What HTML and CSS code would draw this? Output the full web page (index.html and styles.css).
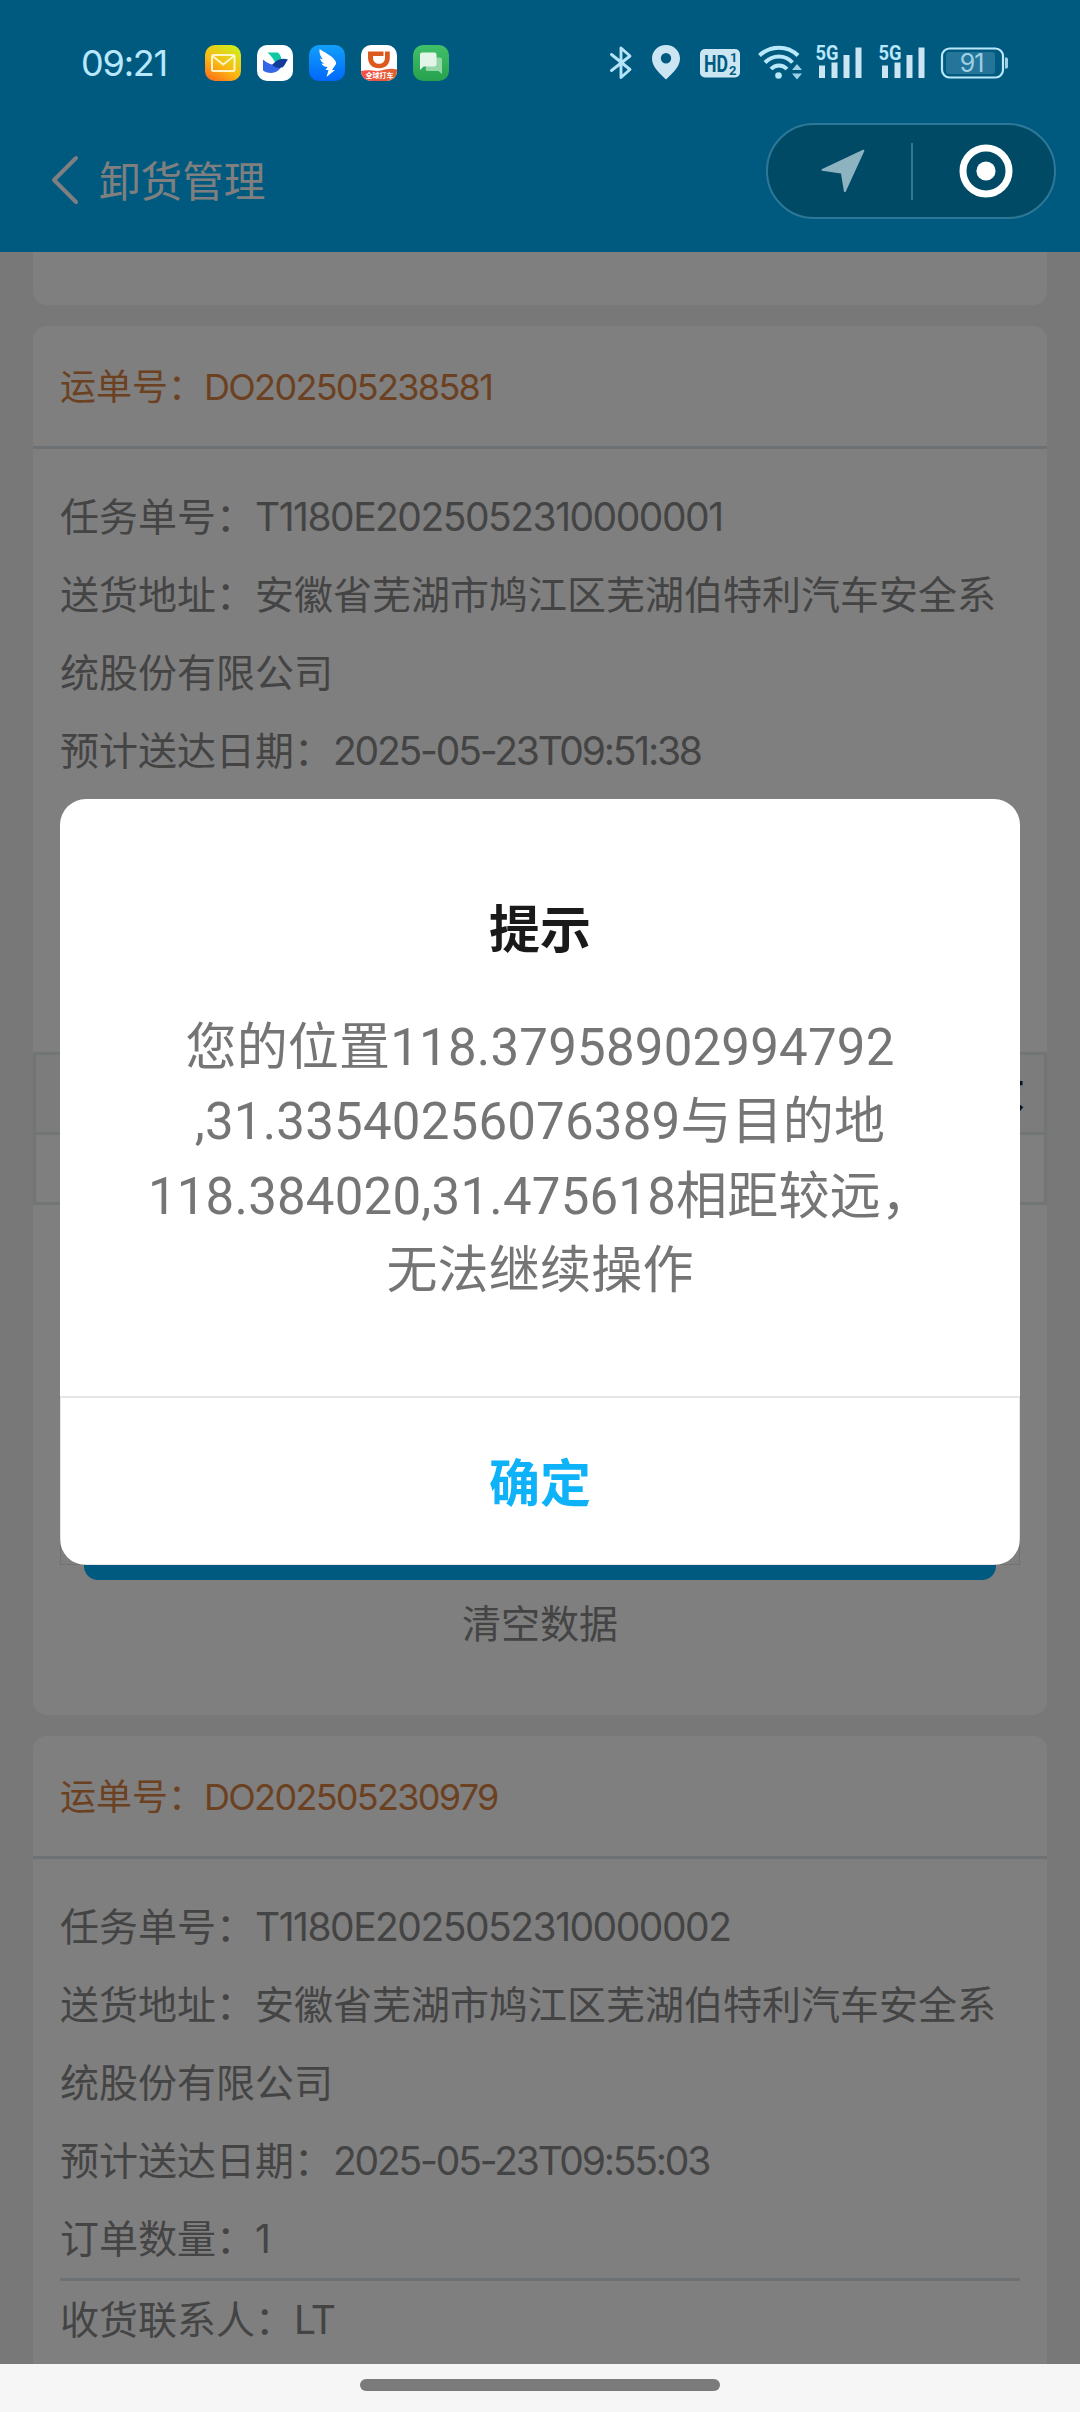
FILE: index.html
```html
<!DOCTYPE html>
<html lang="zh-CN">
  <head>
    <meta charset="UTF-8" />
    <meta name="viewport" content="width=device-width, initial-scale=1.0" />
    <title>卸货管理</title>
    <link rel="stylesheet" href="styles.css">
  </head>
  <body>
    <div class="screen">
      <header class="header">
        <!-- Status bar -->
        <div class="status-bar">
          <span class="clock">09:21</span>
          <div class="app-icons">
            <svg width="36" height="36" viewBox="0 0 36 36">
              <defs>
                <linearGradient id="mail-bg" x1="0.1" y1="1" x2="0.7" y2="0">
                  <stop offset="0" stop-color="#ff6a1a" />
                  <stop offset="0.45" stop-color="#fbb612" />
                  <stop offset="1" stop-color="#d3ea1c" />
                </linearGradient>
              </defs>
              <rect width="36" height="36" rx="10" fill="url(#mail-bg)" />
              <rect x="7" y="10" width="22.500" height="16" rx="1.500" fill="none" stroke="#fff6c8" stroke-width="2" />
              <path d="M7.500 11l10.700 8.500L29 11" fill="none" stroke="#fff6c8" stroke-width="2" />
            </svg>
            <svg width="36" height="36" viewBox="0 0 36 36">
              <rect width="36" height="36" rx="10" fill="#fff" />
              <path d="M10.500 7.500h10.500c2 1.800 3 4.200 3.500 7-2.200.8-4 2-6 4-1.500-4-4.500-8-8-11z" fill="#0fc9a4" />
              <path d="M6 14.500c4 3.500 9 6 14 6 2.500 0 4.500-.8 6.500-2.500-2.500 6-7 10-12.500 10-3.500 0-6-1-8-2.500z" fill="#3566e8" />
              <path d="M15 20c4-4.500 9-8 16-5.500-2 2-2.500 5-4.500 7-3 2.500-8 1.500-11.500-1.500z" fill="#133c9a" />
            </svg>
            <svg width="36" height="36" viewBox="0 0 36 36">
              <defs>
                <linearGradient id="wing-bg" x1="0" y1="0" x2="0" y2="1">
                  <stop offset="0" stop-color="#12a0fb" />
                  <stop offset="1" stop-color="#0067fb" />
                </linearGradient>
              </defs>
              <rect width="36" height="36" rx="10" fill="url(#wing-bg)" />
              <path d="M10.500 4c5 3.500 11 6 14 9.500 1.500 2 3 3.500 2.500 5.500l-4 6h3L17.500 32l2-7h-3l2-3c-3 0-5-1.500-6-3.500l3 .2c-2.500-1.200-4-3-4.500-5.200l3 1c-2.500-3-4-6.500-3.500-10.500z" fill="#fff" />
            </svg>
            <svg width="36" height="36" viewBox="0 0 36 36">
              <defs>
                <linearGradient id="car-bg" x1="0" y1="0" x2="1" y2="0">
                  <stop offset="0" stop-color="#f4504a" />
                  <stop offset="1" stop-color="#e0602f" />
                </linearGradient>
                <clipPath id="car-clip"><rect width="36" height="36" rx="10" /></clipPath>
              </defs>
              <rect width="36" height="36" rx="10" fill="#fff" />
              <path d="M0 26c8-2 14 1 20-.5s10-2.500 16-1v13H0z" fill="url(#car-bg)" clip-path="url(#car-clip)" />
              <path d="M7 6.500h15.500V11H12v1.500c0 4 2.500 6.300 6 6.300s6-2.300 6-6.300v-6h4.800v6c0 6.800-4.300 10.800-10.800 10.800S7 19.300 7 12.500z" fill="#dc5a1d" />
              <text x="18.500" y="32.500" class="car-label">全球打车</text>
            </svg>
            <svg width="36" height="36" viewBox="0 0 36 36">
              <defs>
                <linearGradient id="chat-bg" x1="0" y1="0" x2="0" y2="1">
                  <stop offset="0" stop-color="#42c069" />
                  <stop offset="1" stop-color="#26a14d" />
                </linearGradient>
              </defs>
              <rect width="36" height="36" rx="10" fill="url(#chat-bg)" />
              <path d="M16 12.500h11a2 2 0 0 1 2 2V29l-3.500-3H14.500a2 2 0 0 1-2-2z" fill="#94d6a8" />
              <path d="M9 7.500h12.500a2 2 0 0 1 2 2v10a2 2 0 0 1-2 2H10.500L7 25V9.500a2 2 0 0 1 2-2z" fill="#e3f5e8" />
            </svg>
          </div>
          <svg class="status-icons" width="400" height="36" viewBox="0 0 400 36">
            <g fill="none" stroke="#b5e4f8" stroke-width="2.900" stroke-linejoin="round" stroke-linecap="round">
              <path d="M1.500 9.500L20 24.500l-9 8V3l9 8L1.500 25.500" />
            </g>
            <path d="M56 0c-8 0-14 6-14 13.500 0 8 7 14.500 14 21 7-6.500 14-13 14-21C70 6 64 0 56 0zm0 8a5.200 5.200 0 1 1 0 10.400A5.200 5.200 0 0 1 56 8z" fill="#cbe6f2" fill-rule="evenodd" />
            <rect x="90" y="4" width="40" height="28.500" rx="5" fill="#cbe6f2" />
            <text x="94" y="26.500" class="hd-text" textLength="24" lengthAdjust="spacingAndGlyphs">HD</text>
            <text x="120" y="17" class="hd-sim">1</text>
            <text x="119" y="30" class="hd-sim">2</text>
            <g fill="none" stroke="#b9e8fb" stroke-width="4">
              <path d="M149.500 10.500c11-10.500 28-10.500 38.500 0" />
              <path d="M155 17.500c8-8 20-8 27.500 0" />
              <path d="M161 24c4.500-4.800 11.500-4.800 16 0" />
            </g>
            <circle cx="168.500" cy="30.500" r="3.300" fill="#b9e8fb" />
            <path d="M182 25l5-6 5 6zM182 28.500l5 6 5-6z" fill="#9fd0e4" />
            <text x="205.500" y="15" class="net-text" textLength="23" lengthAdjust="spacingAndGlyphs">5G</text>
            <path d="M209 20.500h6V33h-6zM221.500 17.500h6V33h-6zM233.500 10h6v23h-6zM245.500 2.500h6V33h-6z" class="signal" />
            <text x="268.500" y="15" class="net-text" textLength="23" lengthAdjust="spacingAndGlyphs">5G</text>
            <path d="M272 20.500h6V33h-6zM284.500 17.500h6V33h-6zM296.500 10h6v23h-6zM308.500 2.500h6V33h-6z" class="signal" />
            <rect x="332" y="3.500" width="61" height="29" rx="7.500" fill="none" stroke="#b9e8fb" stroke-width="2.200" />
            <rect x="336" y="7" width="49" height="22" rx="3" fill="#25759a" />
            <path d="M395 12.500h1.500a1.500 1.500 0 0 1 1.500 1.500v8a1.500 1.500 0 0 1-1.500 1.500H395z" fill="#9fd0e4" />
            <text x="361.500" y="26.500" class="battery-text">91</text>
          </svg>
        </div>

        <!-- Title bar with mini program capsule -->
        <div class="nav-bar">
          <svg class="back" width="30" height="52" viewBox="0 0 30 52">
            <path d="M26 4L4 26l22 22" fill="none" stroke="#fff" stroke-width="4" stroke-linecap="round" stroke-linejoin="round" />
          </svg>
          <h1 class="page-title">卸货管理</h1>
          <div class="capsule">
            <svg width="44" height="44" viewBox="0 0 44 44">
              <path d="M1.200 20L42 .8c1-.4 1.700.3 1.300 1.300L24.800 42.500c-.5 1-1.700.8-1.900-.3L20 24.500 1.300 21.700c-1.200-.2-1.200-1.200-.1-1.700z" fill="#8db3c1" />
            </svg>
            <span class="capsule-line"></span>
            <svg width="54" height="54" viewBox="0 0 54 54">
              <circle cx="27" cy="27" r="23" fill="none" stroke="#fff" stroke-width="7" />
              <circle cx="27" cy="27" r="9.600" fill="#fff" />
            </svg>
          </div>
        </div>
      </header>

      <main class="list">
        <section class="card card-tail"></section>

        <section class="card card-current">
          <div class="card-head">运单号：<span class="code">DO202505238581</span></div>
          <div class="card-body">
            <p>任务单号：<span class="num">T1180E2025052310000001</span></p>
            <p>送货地址：安徽省芜湖市鸠江区芜湖伯特利汽车安全系统股份有限公司</p>
            <p>预计送达日期：<span class="date">2025-05-23T09:51:38</span></p>
          </div>
          <div class="goods-table">
            <div class="goods-head">件数</div>
            <div class="goods-row"></div>
          </div>
          <div class="actions">
            <div class="submit"></div>
            <div class="clear">清空数据</div>
          </div>
        </section>

        <section class="card">
          <div class="card-head">运单号：<span class="code">DO202505230979</span></div>
          <div class="card-body">
            <p>任务单号：<span class="num">T1180E2025052310000002</span></p>
            <p>送货地址：安徽省芜湖市鸠江区芜湖伯特利汽车安全系统股份有限公司</p>
            <p>预计送达日期：<span class="date">2025-05-23T09:55:03</span></p>
            <p>订单数量：1</p>
            <p class="contact">收货联系人：<span class="num">LT</span></p>
          </div>
        </section>
      </main>

      <footer class="home-bar"><span class="home-pill"></span></footer>

      <!-- Location warning popup -->
      <div class="mask">
        <div class="popup">
          <div class="popup-content">
            <h2 class="popup-title">提示</h2>
            <p class="popup-text">您的位置118.37958902994792<br>,31.33540256076389与目的地<br>118.384020,31.475618相距较远，<br>无法继续操作</p>
          </div>
          <button class="popup-ok">确定</button>
        </div>
      </div>
    </div>
  </body>
</html>
```

FILE: styles.css
```css
* {
  box-sizing: border-box;
}

body {
  margin: 0;
  font-family: Inter, "Noto Sans CJK SC", sans-serif;
}

h1, h2, p {
  margin: 0;
  font-weight: normal;
}

.screen {
  position: relative;
  width: 1080px;
  height: 2412px;
  display: flex;
  flex-direction: column;
  overflow: hidden;
  background: #f1f1f1;
}

/* Header */
.header {
  height: 252px;
  flex: none;
  background: #00b4ff;
}

/* status bar and capsule are drawn by the system, above the mask */
.status-bar {
  position: relative;
  z-index: 2;
  height: 125px;
  padding: 0 70px 0 81px;
  display: flex;
  align-items: center;
}

.clock {
  width: 124px;
  font-size: 36px;
  letter-spacing: -1.2px;
  color: #b9e8fd;
}

.app-icons {
  display: flex;
  gap: 16px;
}

.status-icons {
  margin-left: auto;
  overflow: visible;
}

.car-label {
  font: bold 7px "Noto Sans CJK SC", sans-serif;
  fill: #fff;
  text-anchor: middle;
}

.hd-text {
  font: bold 23px Roboto, sans-serif;
  fill: #005b82;
}

.hd-sim {
  font: bold 13px Roboto, sans-serif;
  fill: #005b82;
}

.net-text {
  font: bold 20px Roboto, sans-serif;
  fill: #b9e8fb;
}

.signal {
  fill: #cbe6f2;
}

.battery-text {
  font: 25px Inter, sans-serif;
  letter-spacing: -1px;
  fill: #9fcfe3;
  text-anchor: middle;
}

.nav-bar {
  height: 127px;
  padding: 0 24px 0 50px;
  display: flex;
  align-items: flex-start;
}

.back {
  margin-top: 29px;
}

.page-title {
  margin-left: 19px;
  line-height: 60px;
  margin-top: 27px;
  font-size: 41.600px;
  color: #fff;
}

.capsule {
  position: relative;
  z-index: 2;
  width: 290px;
  height: 96px;
  margin: -2px 0 0 auto;
  padding-left: 53px;
  display: flex;
  align-items: center;
  gap: 46px;
  background: #004a65;
  border: 2px solid #2d7898;
  border-radius: 48px;
}

.capsule-line {
  width: 2px;
  height: 57px;
  background: #2d7898;
}

/* Waybill cards */
.list {
  flex: 1;
  min-height: 0;
  overflow: hidden;
  padding: 0 33px;
  display: flex;
  flex-direction: column;
  gap: 21px;
}

.card {
  flex: none;
  background: #fff;
  border-radius: 14px;
}

.card-tail {
  height: 53px;
  border-radius: 0 0 14px 14px;
}

.card-current {
  height: 1389px;
  display: flex;
  flex-direction: column;
}

.card-head {
  height: 123px;
  padding: 0 27px;
  line-height: 122px;
  font-size: 36px;
  color: #d88244;
  border-bottom: 3px solid #dce2e6;
}

.card-body {
  padding: 29px 27px;
  font-size: 39px;
  line-height: 78px;
  color: #888;
}

.code {
  letter-spacing: -1.7px;
}

.num {
  letter-spacing: -1.5px;
}

.date {
  letter-spacing: -2.2px;
}

.contact {
  border-top: 3px solid #dce2e6;
}

.goods-table {
  margin-top: 233px;
  border: 3px solid #e4eaec;
}

.goods-head {
  height: 80px;
  padding-right: 20px;
  line-height: 76px;
  text-align: right;
  font-size: 39px;
  font-weight: bold;
  color: #222;
  background: #f8f9f9;
  border-bottom: 3px solid #e4eaec;
}

.goods-row {
  height: 67px;
}

.actions {
  margin-top: auto;
  padding: 0 51px 52px;
}

.submit {
  height: 120px;
  border-radius: 14px;
  background: #00b4ff;
}

.clear {
  padding-top: 5px;
  font-size: 39px;
  line-height: 78px;
  text-align: center;
  color: #888;
}

/* Home indicator */
.home-bar {
  height: 48px;
  flex: none;
  display: flex;
  justify-content: center;
  padding-top: 15px;
  background: #f6f6f6;
}

.home-pill {
  width: 360px;
  height: 12px;
  border-radius: 6px;
  background: #7b7b7b;
}

/* Popup */
.mask {
  position: absolute;
  top: 0;
  left: 0;
  right: 0;
  bottom: 48px;
  z-index: 1;
  display: flex;
  justify-content: center;
  align-items: center;
  background: rgba(0, 0, 0, 0.5);
}

.popup {
  width: 960px;
  height: 766px;
  display: flex;
  flex-direction: column;
  background: #fff;
  border-radius: 26px;
}

.popup-content {
  flex: 1;
  padding-top: 96px;
  text-align: center;
}

.popup-title {
  font-size: 51px;
  font-weight: bold;
  line-height: 70px;
  color: #1a1a1a;
}

.popup-text {
  margin-top: 46px;
  font-family: Roboto, "Noto Sans CJK SC", sans-serif;
  font-size: 51px;
  line-height: 74.300px;
  letter-spacing: 0.2px;
  color: #757575;
}

.popup-ok {
  height: 169px;
  padding: 0 0 2px;
  font-family: inherit;
  font-size: 51px;
  font-weight: bold;
  color: #0eb2f8;
  background: none;
  border: 1px solid rgba(0, 0, 0, 0.1);
  border-top-width: 2px;
}
```
